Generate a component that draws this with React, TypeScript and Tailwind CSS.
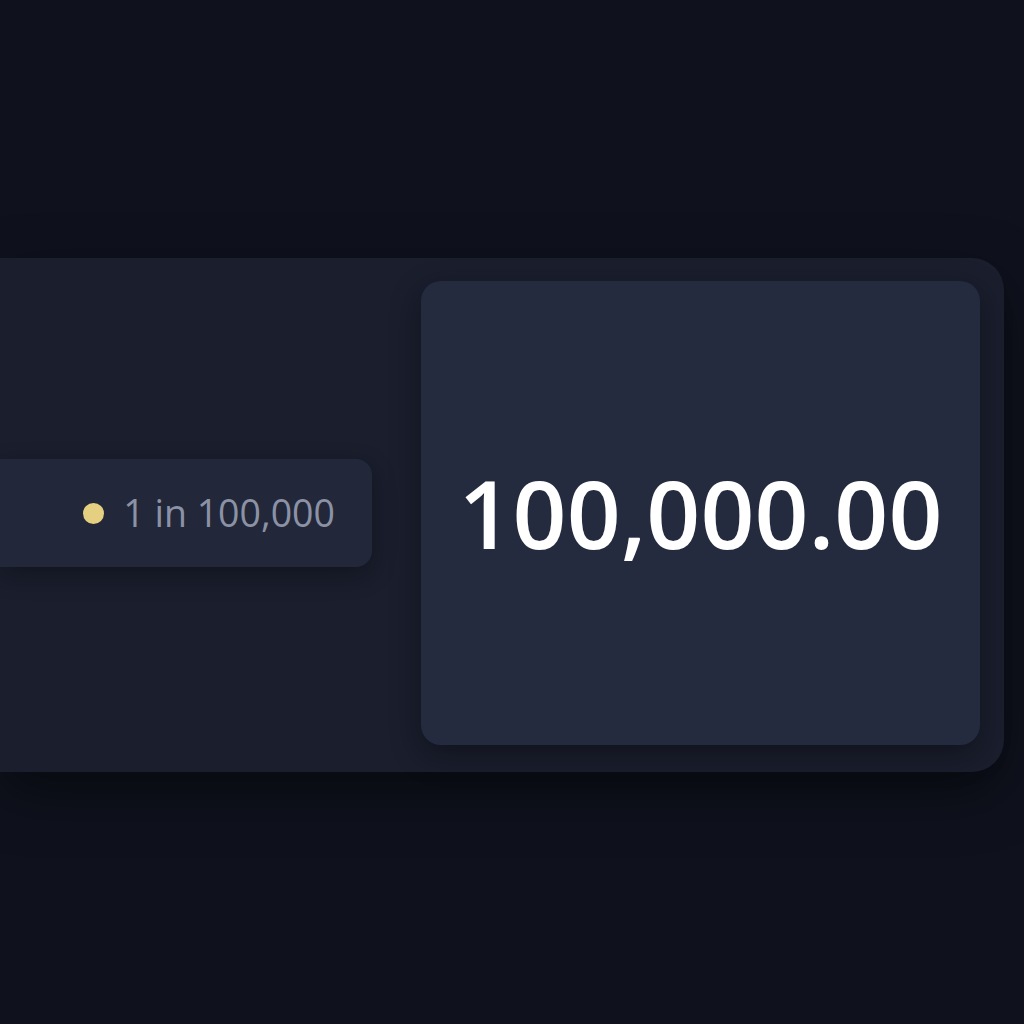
export default function App() {
  return (
    <div className="h-screen w-full bg-[#0f121d] pt-[258px] font-['Open_Sans','Noto_Sans',sans-serif]">
      <div className="flex h-[514px] w-[1004px] rounded-r-[32px] bg-[#1a1e2d] pt-[23px] pr-[24px] pb-[27px] shadow-[0_20px_60px_rgba(0,0,0,0.45)]">
        <div className="flex w-[372px] shrink-0 items-center">
          <div className="flex h-[108px] w-full items-center justify-end gap-[19px] rounded-r-2xl bg-[#222839] pr-[37px] shadow-[0_8px_24px_rgba(0,0,0,0.3)]">
            <span className="h-[21px] w-[21px] rounded-full bg-[#e5cf80]" />
            <span className="text-[37.5px] leading-none text-[#8c92a6]">1 in 100,000</span>
          </div>
        </div>
        <div className="ml-[49px] flex flex-1 items-center justify-center rounded-[20px] bg-[#242b3f] shadow-[0_10px_30px_rgba(0,0,0,0.35)]">
          <span className="text-[94.5px] font-semibold leading-none text-white">100,000.00</span>
        </div>
      </div>
    </div>
  );
}
